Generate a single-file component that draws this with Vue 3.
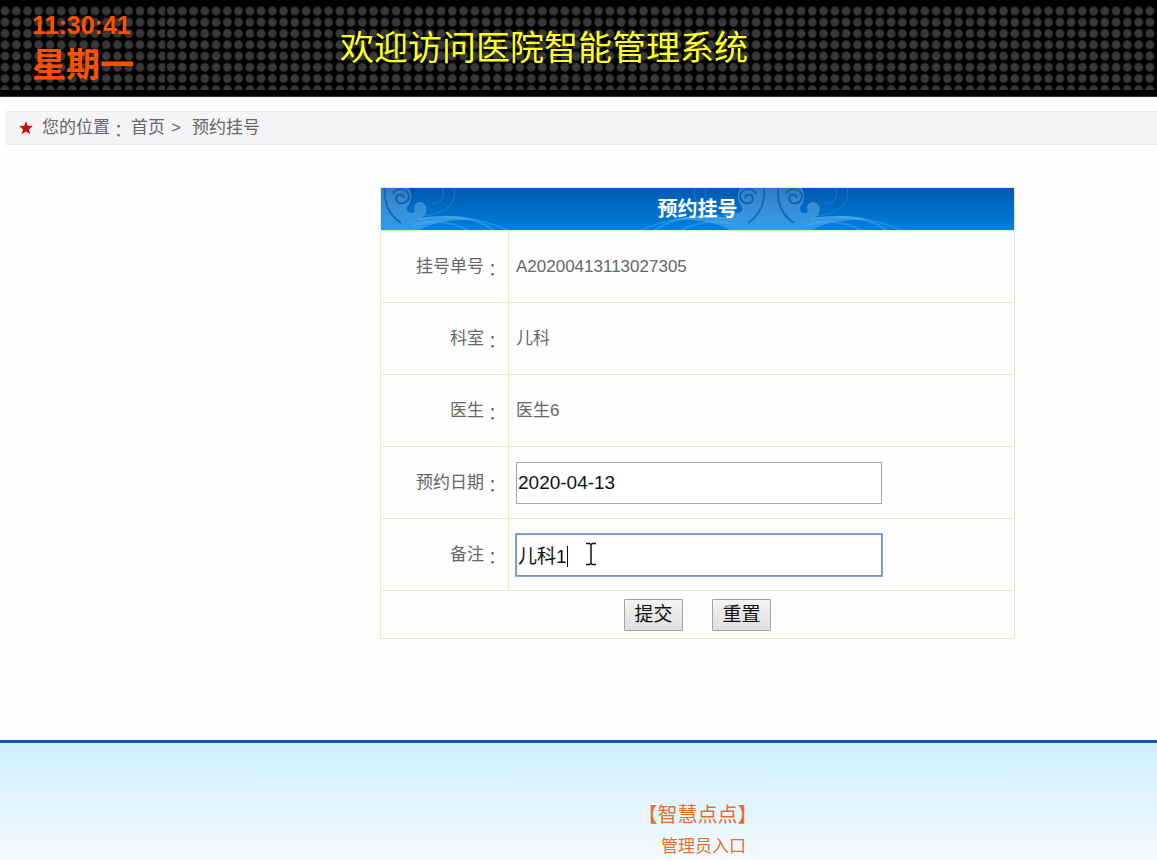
<script setup>
import { ref } from 'vue'

const details = [
  { label: '挂号单号', value: 'A20200413113027305' },
  { label: '科室', value: '儿科' },
  { label: '医生', value: '医生6' },
]
const initial = { date: '2020-04-13', note: '儿科1' }
const date = ref(initial.date)
const note = ref(initial.note)

function reset() {
  date.value = initial.date
  note.value = initial.note
}
</script>

<template>
  <div class="page">
    <header class="banner">
      <svg class="dots" aria-hidden="true">
        <defs>
          <pattern id="led-a" x="-0.6" y="5.4" width="11.25" height="11.25" patternUnits="userSpaceOnUse">
            <circle cx="5.6" cy="5.6" r="4.4" fill="#383838" />
          </pattern>
          <pattern id="led-b" x="165.5" y="5.4" width="11.25" height="11.25" patternUnits="userSpaceOnUse">
            <circle cx="5.6" cy="5.6" r="4.4" fill="#383838" />
          </pattern>
        </defs>
        <rect y="6" width="165" height="84" fill="url(#led-a)" />
        <rect x="165" y="6" width="100%" height="84" fill="url(#led-b)" />
      </svg>
      <div class="clock">
        <time class="time">11:30:41</time>
        <span class="weekday">星期一</span>
      </div>
      <h1 class="title">欢迎访问医院智能管理系统</h1>
    </header>

    <nav class="crumbs" aria-label="您的位置">
      <svg class="star" viewBox="0 0 14 14" aria-hidden="true">
        <path d="M7 0.2 8.8 4.7 13.8 5.1 10 8.3 11.2 13.2 7 10.5 2.8 13.2 4 8.3 0.2 5.1 5.2 4.7Z" fill="#d4090f" />
      </svg>
      <span>您的位置<span class="colon">：</span></span>
      <a href="#home">首页</a>
      <span class="sep">&gt;</span>
      <span class="current">预约挂号</span>
    </nav>

    <main class="main">
      <form @submit.prevent @reset.prevent="reset">
        <table class="sheet">
          <thead>
            <tr>
              <th colspan="2" class="heading">
                <svg class="swirls" aria-hidden="true">
                  <defs>
                    <linearGradient id="leaf" x1="0" y1="0" x2="0" y2="43" gradientUnits="userSpaceOnUse">
                      <stop offset="0" stop-color="#fff" stop-opacity="0.2" />
                      <stop offset="1" stop-color="#6cc4ff" stop-opacity="0.4" />
                    </linearGradient>
                    <g id="swirl">
                      <path d="M0 0H31C35 8 33 15 29 19C27 25 35 27 37 23C34 17 40 12 45 15C51 18 49 28 43 30C60 28 80 27 96 32C72 31 50 36 40 43H0Z" fill="url(#leaf)" />
                      <path d="M15 6C17 -1 30 0 31 8C31 16 20 18 18 11C18 6 25 5 26 10" fill="none" stroke="#0d62b3" stroke-width="2" />
                      <path d="M7 0C6 14 11 27 23 35" fill="none" stroke="#1268b9" stroke-width="2" />
                      <path d="M40 31C75 25 108 32 132 43" fill="none" stroke="#7cc6f8" stroke-opacity="0.3" stroke-width="1.5" />
                      <path d="M66 29C88 28 105 34 117 43M35 37C55 31 76 34 91 43" fill="none" stroke="#55b4f5" stroke-opacity="0.35" stroke-width="2.5" />
                      <path d="M76 0C80 14 68 26 45 28M64 0C69 9 63 16 54 15" fill="none" stroke="#6ab4eb" stroke-opacity="0.28" />
                    </g>
                  </defs>
                  <use href="#swirl" x="-3" />
                  <use href="#swirl" x="390" />
                  <use href="#swirl" transform="translate(390 0) scale(-1 1)" />
                </svg>
                <span class="heading-text">预约挂号</span>
              </th>
            </tr>
          </thead>
          <tbody>
            <tr v-for="row in details" :key="row.label">
              <th scope="row" class="name">{{ row.label }}<span class="colon">：</span></th>
              <td class="value">{{ row.value }}</td>
            </tr>
            <tr>
              <th scope="row" class="name">
                <label for="date">预约日期<span class="colon">：</span></label>
              </th>
              <td class="value"><input id="date" v-model="date" class="field" type="text" /></td>
            </tr>
            <tr>
              <th scope="row" class="name">
                <label for="note">备注<span class="colon">：</span></label>
              </th>
              <td class="value">
                <div class="active-wrap">
                  <input id="note" v-model="note" class="field active" type="text" />
                  <span class="caret"></span>
                  <svg class="ibeam" viewBox="0 0 12 24" aria-hidden="true">
                    <path d="M1 1.5H4.5L6 2.5 7.5 1.5H11M6 2.5V21.5M1 22.5H4.5L6 21.5 7.5 22.5H11" fill="none" stroke="#111" stroke-width="1.5" />
                  </svg>
                </div>
              </td>
            </tr>
            <tr>
              <td colspan="2" class="actions">
                <div class="buttons">
                  <button type="submit">提交</button>
                  <button type="reset">重置</button>
                </div>
              </td>
            </tr>
          </tbody>
        </table>
      </form>
    </main>

    <footer class="footer">
      <a class="brand" href="#site">【智慧点点】</a>
      <a class="admin" href="#admin">管理员入口</a>
    </footer>
  </div>
</template>

<style>
body {
  margin: 0;
  background: #fefefe;
}
</style>

<style scoped>
.page {
  display: flex;
  flex-direction: column;
  min-height: 100vh;
  overflow-x: hidden;
  color: #666;
  font: 17px/24px "Liberation Sans", "Noto Sans CJK SC", sans-serif;
}
a {
  color: inherit;
  text-decoration: none;
}
.colon {
  font-family: "Noto Sans CJK TC", sans-serif;
  line-height: 1;
  vertical-align: sub;
}
.banner {
  position: relative;
  display: flex;
  align-items: center;
  box-sizing: border-box;
  height: 97px;
  background: #000;
  border-bottom: 1px solid #333;
}
.dots {
  position: absolute;
  inset: 0;
  width: 100%;
  height: 100%;
}
.clock {
  position: relative;
  display: flex;
  flex-direction: column;
  flex: none;
  box-sizing: border-box;
  width: 340px;
  padding: 0 0 6px 32px;
  color: #ff5000;
  font-weight: bold;
}
.time {
  font-size: 25px;
  line-height: 40px;
}
.weekday {
  font-size: 34px;
  line-height: 40px;
}
.title {
  position: relative;
  margin: 0;
  color: #ff2;
  font-size: 34px;
  font-weight: normal;
  line-height: 48px;
  white-space: nowrap;
}
.crumbs {
  display: flex;
  align-items: center;
  box-sizing: border-box;
  height: 34px;
  margin: 14px 0 0 6px;
  padding-left: 12px;
  background: #f4f4f6;
  border: 1px solid #e9e9ea;
  border-right: 0;
}
.star {
  width: 14px;
  height: 14px;
  margin-right: 9px;
}
.crumbs a {
  margin-left: 4px;
}
.sep {
  margin: 0 11px 0 6px;
}
.main {
  flex: 1;
  padding: 42px 0 60px 238px;
}
.sheet {
  width: 635px;
  max-width: 100%;
  margin: 0 auto;
  border-collapse: separate;
  border-spacing: 0;
  border: solid #e5eabf;
  border-width: 1px 0 0 1px;
}
.sheet th,
.sheet td {
  box-sizing: border-box;
  height: 72px;
  padding: 0 7px;
  border: solid #e5eabf;
  border-width: 0 1px 1px 0;
  font-weight: normal;
}
.sheet .heading {
  position: relative;
  height: 43px;
  padding: 0;
  overflow: hidden;
  background: linear-gradient(#0059b0, #0080dc) padding-box;
  color: #fff;
  font-size: 20px;
  font-weight: bold;
}
.swirls {
  position: absolute;
  inset: 0;
  width: 100%;
  height: 100%;
}
.heading-text {
  position: relative;
}
.sheet .name {
  width: 128px;
  text-align: right;
  white-space: nowrap;
}
.value {
  text-align: left;
}
.field {
  display: block;
  box-sizing: border-box;
  width: 366px;
  max-width: 100%;
  height: 42px;
  margin: 0;
  padding: 1px;
  background: #fff;
  border: 1px solid #a6a6a6;
  border-radius: 0;
  outline: 0;
  color: #111;
  font: 19px/24px "Liberation Sans", "Noto Sans CJK SC", sans-serif;
}
.active {
  border-color: #6f94cf;
  box-shadow: 0 0 0 1px #86a6da;
  caret-color: transparent;
}
.active-wrap {
  position: relative;
}
.caret {
  position: absolute;
  top: 12px;
  left: 51px;
  width: 1px;
  height: 21px;
  background: #111;
}
.ibeam {
  position: absolute;
  top: 8px;
  left: 69px;
  width: 12px;
  height: 24px;
}
.sheet .actions {
  height: 48px;
}
.buttons {
  display: flex;
  justify-content: center;
  gap: 29px;
}
button {
  width: 59px;
  height: 32px;
  padding: 0;
  background: linear-gradient(#f4f4f4, #dedee0);
  border: 1px solid #a3a3a3;
  border-radius: 1px;
  color: #111;
  font: 19px/24px "Liberation Sans", "Noto Sans CJK SC", sans-serif;
}
.footer {
  display: flex;
  flex-direction: column;
  align-items: center;
  gap: 6px;
  padding: 59px 0 0 238px;
  background: linear-gradient(#cdeeff, #f4faff);
  border-top: 3px solid #1259a8;
  color: #e2702a;
  line-height: 26px;
}
.brand {
  font-size: 20px;
}
.admin {
  padding-left: 12px;
}
</style>
